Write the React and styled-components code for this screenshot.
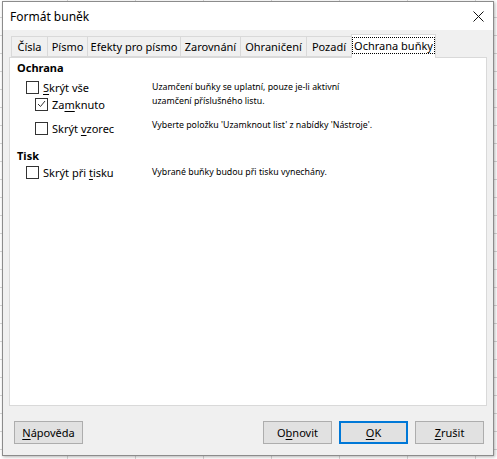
import styled, { createGlobalStyle } from "styled-components";

const GlobalStyle = createGlobalStyle`
  html, body {
    margin: 0;
    padding: 0;
  }
  body {
    width: 497px;
    height: 459px;
    overflow: hidden;
    font-family: "Noto Sans", "DejaVu Sans", sans-serif;
    font-size: 11px;
    color: #000;
    background-color: #fff;
    background-image:
      repeating-linear-gradient(to right, transparent 0 67px, #d6d6d6 67px 68px),
      repeating-linear-gradient(to bottom, transparent 0 17px, #d6d6d6 17px 18px);
  }
`;

const Dialog = styled.div`
  box-sizing: border-box;
  margin: 1px 3px 0 2px;
  width: 492px;
  height: 455px;
  display: flex;
  flex-direction: column;
  background: #f0f0f0;
  border: 1px solid #8c8c8c;
  box-shadow: 1px 1px 3px rgba(0, 0, 0, 0.3);
`;

const TitleBar = styled.div`
  height: 28px;
  flex: none;
  display: flex;
  align-items: center;
  justify-content: space-between;
  padding: 0 8px 0 7px;
  background: #fff;
  font-size: 12px;
`;

const CloseButton = styled.div`
  width: 12px;
  height: 12px;
  display: flex;
  align-items: center;
  justify-content: center;
  margin-right: 1px;
`;

const Body = styled.div`
  flex: 1;
  display: flex;
  flex-direction: column;
  padding: 3px 6px 0 6px;
`;

const TabStrip = styled.div`
  display: flex;
  align-items: flex-end;
  height: 24px;
  padding-left: 2px;
  position: relative;
  z-index: 1;
`;

const Tab = styled.div`
  box-sizing: border-box;
  width: ${(p) => p.$w}px;
  height: ${(p) => (p.$active ? 24 : 21)}px;
  display: flex;
  align-items: center;
  justify-content: center;
  border: 1px solid #d9d9d9;
  border-bottom: ${(p) => (p.$active ? "none" : "1px solid #d9d9d9")};
  border-left: ${(p) => (p.$first || p.$active ? "1px solid #d9d9d9" : "none")};
  background: ${(p) => (p.$active ? "#fff" : "#f0f0f0")};
  margin-left: ${(p) => (p.$active ? "-1px" : "0")};
  margin-bottom: ${(p) => (p.$active ? "-1px" : "0")};
  padding-bottom: ${(p) => (p.$active ? "2px" : "0")};
  white-space: nowrap;
`;

const FocusText = styled.span`
  outline: 1px dotted #000;
  outline-offset: 0;
  padding: 0 1px;
  line-height: 15px;
`;

const Panel = styled.div`
  box-sizing: border-box;
  height: 349px;
  background: #fff;
  border: 1px solid #d9d9d9;
  padding: 2px 0 0 7px;
`;

const SectionTitle = styled.div`
  font-weight: 700;
  line-height: 15px;
  margin-top: ${(p) => p.$top || 0}px;
`;

const Columns = styled.div`
  display: flex;
  padding-left: 9px;
  margin-top: ${(p) => p.$top || 0}px;
`;

const OptionCol = styled.div`
  width: 126px;
  flex: none;
  display: flex;
  flex-direction: column;
`;

const DescCol = styled.div`
  display: flex;
  flex-direction: column;
  font-size: 8.8px;
`;

const Option = styled.label`
  display: flex;
  align-items: center;
  gap: 4px;
  height: 18px;
  padding-left: ${(p) => p.$indent || 0}px;
  margin-top: ${(p) => p.$top || 0}px;
  white-space: nowrap;
`;

const Box = styled.span`
  box-sizing: border-box;
  width: 13px;
  height: 13px;
  flex: none;
  border: 1px solid #333;
  background: #fff;
  display: flex;
  align-items: center;
  justify-content: center;
`;

const Desc = styled.div`
  line-height: 14px;
  margin-top: ${(p) => p.$top || 0}px;
`;

const Footer = styled.div`
  display: flex;
  align-items: center;
  gap: 7px;
  padding: 15px 3px 0 5px;
`;

const Spacer = styled.div`
  flex: 1;
`;

const Button = styled.div`
  box-sizing: border-box;
  width: 69px;
  height: 23px;
  display: flex;
  align-items: center;
  justify-content: center;
  background: #e1e1e1;
  border: 1px solid ${(p) => (p.$default ? "#0078d7" : "#adadad")};
  box-shadow: ${(p) => (p.$default ? "inset 0 0 0 1px #0078d7" : "none")};
`;

const Key = styled.u`
  text-underline-offset: 2px;
`;

const Check = ({ checked }) => (
  <Box>
    {checked && (
      <svg width="9" height="8" viewBox="0 0 9 8">
        <path d="M1 4 L3.5 6.5 L8 1" fill="none" stroke="#333" strokeWidth="1" />
      </svg>
    )}
  </Box>
);

const tabs = [
  { label: "Čísla", w: 37 },
  { label: "Písmo", w: 40 },
  { label: "Efekty pro písmo", w: 93 },
  { label: "Zarovnání", w: 60 },
  { label: "Ohraničení", w: 66 },
  { label: "Pozadí", w: 45 },
];

export default function App() {
  return (
    <>
      <GlobalStyle />
      <Dialog>
        <TitleBar>
          <span>Formát buněk</span>
          <CloseButton>
            <svg width="11" height="11" viewBox="0 0 11 11">
              <path d="M0.5 0.5 L10.5 10.5 M10.5 0.5 L0.5 10.5" stroke="#111" strokeWidth="1" />
            </svg>
          </CloseButton>
        </TitleBar>
        <Body>
          <TabStrip>
            {tabs.map((t, i) => (
              <Tab key={t.label} $w={t.w} $first={i === 0}>
                {t.label}
              </Tab>
            ))}
            <Tab $w={85} $active>
              <FocusText>Ochrana buňky</FocusText>
            </Tab>
          </TabStrip>
          <Panel>
            <SectionTitle>Ochrana</SectionTitle>
            <Columns $top={3}>
              <OptionCol>
                <Option>
                  <Check />
                  <span><Key>S</Key>krýt vše</span>
                </Option>
                <Option $indent={9} $top={-1}>
                  <Check checked />
                  <span>Za<Key>m</Key>knuto</span>
                </Option>
                <Option $indent={9} $top={6}>
                  <Check />
                  <span>Skrýt <Key>v</Key>zorec</span>
                </Option>
              </OptionCol>
              <DescCol>
                <Desc $top={2}>
                  Uzamčení buňky se uplatní, pouze je-li aktivní
                  <br />
                  uzamčení příslušného listu.
                </Desc>
                <Desc $top={10}>Vyberte položku 'Uzamknout list' z nabídky 'Nástroje'.</Desc>
              </DescCol>
            </Columns>
            <SectionTitle $top={11}>Tisk</SectionTitle>
            <Columns $top={0}>
              <OptionCol>
                <Option>
                  <Check />
                  <span>Skrýt při <Key>t</Key>isku</span>
                </Option>
              </OptionCol>
              <DescCol>
                <Desc $top={2}>Vybrané buňky budou při tisku vynechány.</Desc>
              </DescCol>
            </Columns>
          </Panel>
          <Footer>
            <Button>
              <span><Key>N</Key>ápověda</span>
            </Button>
            <Spacer />
            <Button>
              <span>O<Key>b</Key>novit</span>
            </Button>
            <Button $default>
              <span><Key>O</Key>K</span>
            </Button>
            <Button>
              <span><Key>Z</Key>rušit</span>
            </Button>
          </Footer>
        </Body>
      </Dialog>
    </>
  );
}
